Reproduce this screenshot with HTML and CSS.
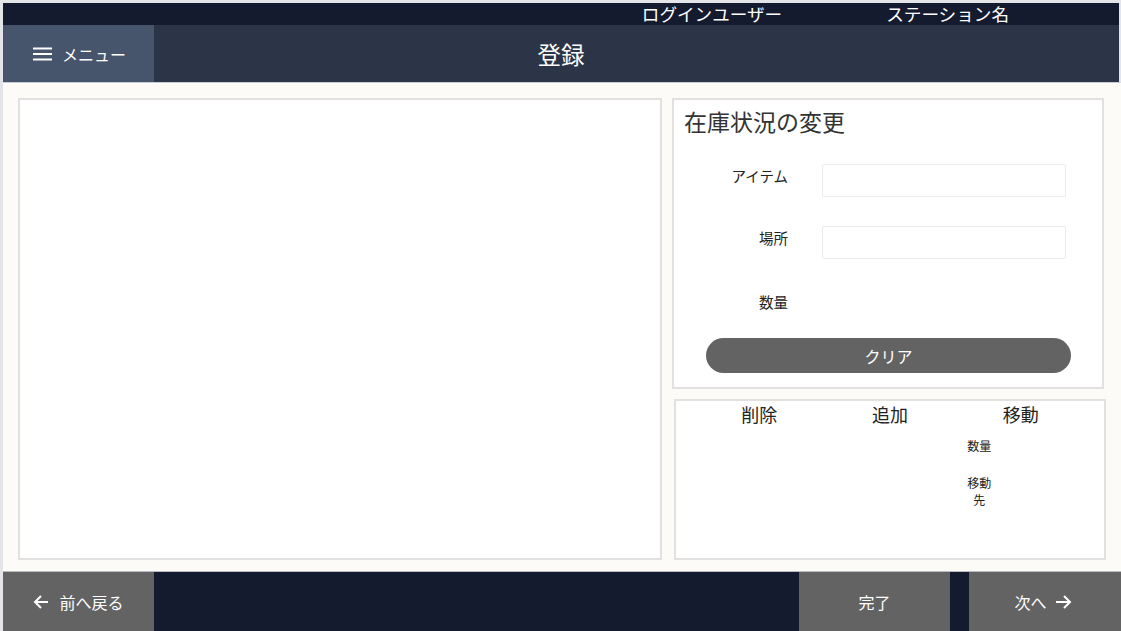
FILE: index.html
```html
<!DOCTYPE html>
<html lang="ja">
<head>
<meta charset="utf-8">
<title>登録</title>
<link rel="stylesheet" href="styles.css">
</head>
<body>
<div class="frame">
  <div class="topbar">
    <span class="topbar-item">ログインユーザー</span>
    <span class="topbar-item">ステーション名</span>
  </div>
  <header class="header">
    <button class="menu-btn" type="button">
      <svg class="icon-menu" viewBox="0 0 20 14" width="20" height="14" aria-hidden="true">
        <path d="M0 1.5h19M0 7h19M0 12.5h19" stroke="#fff" stroke-width="2" fill="none"/>
      </svg>
      <span>メニュー</span>
    </button>
    <h1 class="title">登録</h1>
    <div class="header-spacer"></div>
  </header>

  <main class="content">
    <section class="panel panel-main"></section>
    <div class="side">
      <section class="panel panel-edit">
        <h2 class="panel-title">在庫状況の変更</h2>
        <div class="form-row">
          <label class="form-label">アイテム</label>
          <input class="form-input" type="text">
        </div>
        <div class="form-row">
          <label class="form-label">場所</label>
          <input class="form-input" type="text">
        </div>
        <div class="form-row form-row-plain">
          <label class="form-label">数量</label>
        </div>
        <button class="clear-btn" type="button">クリア</button>
      </section>
      <section class="panel panel-actions">
        <div class="action-col">
          <h3 class="action-title">削除</h3>
        </div>
        <div class="action-col">
          <h3 class="action-title">追加</h3>
        </div>
        <div class="action-col">
          <h3 class="action-title">移動</h3>
          <div class="mini-label">数量</div>
          <div class="mini-label mini-label-gap">移動先</div>
        </div>
      </section>
    </div>
  </main>

  <footer class="footer">
    <button class="foot-btn" type="button">
      <svg class="arrow" viewBox="0 0 16 16" width="16" height="16" aria-hidden="true">
        <path d="M15 8H2M8 2L2 8l6 6" stroke="#fff" stroke-width="2" fill="none"/>
      </svg>
      <span>前へ戻る</span>
    </button>
    <div class="footer-fill"></div>
    <button class="foot-btn" type="button"><span>完了</span></button>
    <button class="foot-btn foot-btn-next" type="button">
      <span>次へ</span>
      <svg class="arrow" viewBox="0 0 17 16" width="17" height="16" aria-hidden="true">
        <path d="M1 8h14M9 2l6 6-6 6" stroke="#fff" stroke-width="2" fill="none"/>
      </svg>
    </button>
  </footer>
</div>
</body>
</html>
```

FILE: styles.css
```css
* {
  box-sizing: border-box;
}

html, body {
  margin: 0;
  padding: 0;
  height: 100%;
}

body {
  font-family: "Noto Sans CJK JP", "Noto Sans", sans-serif;
  color: #222;
  background: #fcfbf7;
}

.frame {
  height: 631px;
  display: flex;
  flex-direction: column;
  border-top: 3px solid #e3e5e9;
  border-left: 3px solid #e3e5e9;
}

/* top strip with user / station */
.topbar {
  height: 22px;
  background: #141b2e;
  color: #fff;
  display: flex;
  justify-content: flex-end;
  gap: 104px;
  padding-right: 110px;
  font-size: 17.6px;
  line-height: 21px;
  border-right: 2px solid #e3e5e9;
}

.header {
  height: 58px;
  background: #2b3547;
  display: grid;
  grid-template-columns: 151px 1fr 151px;
  align-items: center;
  border-right: 2px solid #e3e5e9;
  border-bottom: 1px solid #c9ccd2;
}

.menu-btn {
  height: 100%;
  border: 0;
  background: #46556c;
  color: #fff;
  font-family: inherit;
  font-size: 16px;
  display: flex;
  align-items: center;
  justify-content: center;
  gap: 9px;
  padding: 0 0 0 2px;
}

.title {
  margin: 0;
  text-align: center;
  color: #fff;
  font-weight: 400;
  font-size: 23.5px;
  line-height: 30px;
}

/* main area */
.content {
  flex: 1;
  display: grid;
  grid-template-columns: 644px 1fr;
  gap: 10px;
  padding: 15px 17px 11px 15px;
  border-bottom: 1px solid #b9bbbe;
}

.panel {
  background: #fff;
  border: 2px solid #e2e1df;
}

.side {
  display: flex;
  flex-direction: column;
  gap: 10px;
}

.panel-edit {
  height: 291px;
  padding: 5px 0 0 10px;
}

.panel-title {
  margin: 0;
  font-size: 23px;
  font-weight: 400;
  line-height: 32px;
  color: #333;
}

.form-row {
  display: grid;
  grid-template-columns: 104px 244px;
  column-gap: 34px;
  align-items: start;
  height: 33px;
  margin-top: 27px;
}

.form-row + .form-row {
  margin-top: 29px;
}

.form-row-plain {
  height: 24px;
}

.form-label {
  text-align: right;
  font-size: 14.5px;
  line-height: 20px;
  padding-top: 2px;
  color: #222;
}

.form-row-plain .form-label {
  padding-top: 4px;
}

.form-input {
  height: 33px;
  border: 1px solid #ececec;
  border-radius: 2px;
  background: #fff;
  outline: none;
}

.clear-btn {
  display: block;
  width: 365px;
  height: 35px;
  margin: 26px 0 0 22px;
  border: 0;
  border-radius: 18px;
  background: #636363;
  color: #fff;
  font-family: inherit;
  font-size: 16px;
}

.panel-actions {
  flex: 1;
  margin: 0 -2px 0 2px;
  display: grid;
  grid-template-columns: repeat(3, 1fr);
  padding: 0 18px;
}

.action-col {
  display: flex;
  flex-direction: column;
}

.action-title {
  margin: 0;
  text-align: center;
  font-size: 18px;
  font-weight: 400;
  line-height: 26px;
  color: #222;
}

.mini-label {
  width: 30px;
  margin-left: 9px;
  text-align: center;
  font-size: 12px;
  line-height: 17px;
  margin-top: 10px;
  color: #222;
}

.mini-label-gap {
  margin-top: 20px;
}

/* bottom navigation */
.footer {
  height: 59px;
  background: #141b2e;
  display: flex;
}

.foot-btn {
  width: 151px;
  height: 100%;
  border: 0;
  background: #636363;
  color: #fff;
  font-family: inherit;
  font-size: 16px;
  display: flex;
  align-items: center;
  justify-content: center;
  gap: 10px;
}

.foot-btn + .foot-btn {
  margin-left: 19px;
}

.footer-fill {
  flex: 1;
}

.foot-btn-next {
  width: 152px;
  gap: 8px;
  padding-right: 10px;
}

.arrow {
  flex: none;
}
```
